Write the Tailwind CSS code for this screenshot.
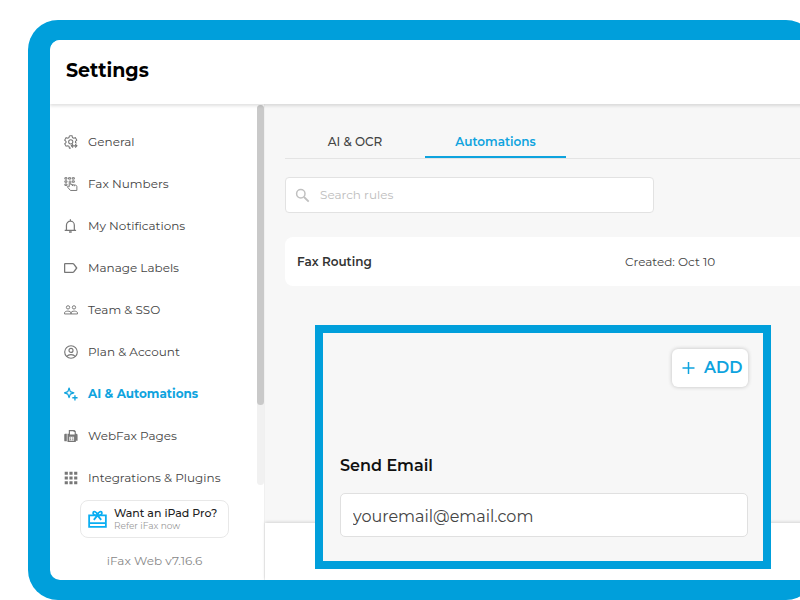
<!DOCTYPE html>
<html lang="en">
<head>
<meta charset="utf-8">
<meta name="viewport" content="width=device-width, initial-scale=1">
<title>Settings</title>
<script src="https://cdn.jsdelivr.net/npm/@tailwindcss/browser@4"></script>
</head>
<body class="flex h-screen overflow-hidden bg-white pt-5 pl-7 font-['Montserrat','Inter',sans-serif] text-[#444]">
<div class="-mr-4 flex min-w-0 flex-1 rounded-[30px] bg-[#009fdb] py-5 pl-[22px]">
  <div class="flex min-w-0 flex-1 flex-col overflow-hidden rounded-l-[10px] bg-white">
    <header class="z-10 flex h-16 shrink-0 items-center bg-white px-4 pb-0.5 shadow-[0_2px_3px_rgba(0,0,0,0.12)]">
      <h1 class="text-[19px] font-bold text-black">Settings</h1>
    </header>
    <div class="flex min-h-0 flex-1">
      <aside class="flex w-[215px] shrink-0 flex-col border-r border-[#f0f0f0]">
        <div class="flex min-h-0 flex-1 overflow-hidden">
          <nav class="min-w-0 flex-1 pt-[17px] text-[12px]" aria-label="Settings">
            <a href="#" class="flex h-[42px] items-center gap-2.5 pl-3.5 whitespace-nowrap">
              <svg class="size-3.5 text-[#777]" viewBox="0 0 16 16" fill="none" stroke="currentColor" stroke-width="1.200"><path d="M6.200.9h3l.5 2 1.300.7 2-.5 1.600 2.700-1.500 1.500v1.300l1.200 1M6.200.9l-.5 2-1.300.7-2-.5L.8 5.800l1.500 1.500v1.400L.8 10.100l1.600 2.700 2-.5 1.300.7.500 2h1.500"/><circle cx="7.700" cy="7.800" r="2.400"/><path d="M8.300 12.400h6.500M12.800 10.400l2 2-2 1.900M10.300 10.500l-2 1.900 2 2"/></svg>General</a>
            <a href="#" class="flex h-[42px] items-center gap-2.5 pl-3.5 whitespace-nowrap">
              <svg class="size-3.5 text-[#777]" viewBox="0 0 16 16" fill="none" stroke="currentColor" stroke-width="1.100"><path d="M1 .8h2.400v1.600H1zM5.200.8h2.400v1.600H5.200zM9.400.8h2.400v1.600H9.400zM1 4.400h2.400V6H1zM9.400 4.400h2.400V6H9.400zM1 8h2.400v1.600H1z"/><path d="M6 11V5.200c0-1.200 1.700-1.200 1.700 0v3.400l5.500.7c.9.200 1.500.8 1.500 1.600v4.500H7.400L4 11.500c-.5-1 .7-1.500 1.300-.9l.7.8M9.700 9v1.300M11.800 9.300v1.300"/></svg>Fax Numbers</a>
            <a href="#" class="flex h-[42px] items-center gap-2.5 pl-3.5 whitespace-nowrap">
              <svg class="size-3.5 text-[#777]" viewBox="0 0 16 16" fill="none" stroke="currentColor" stroke-width="1.400"><path d="M.8 13h13M2.800 13V7a4.500 4.500 0 0 1 9 0v6M7.300 2.500V.4"/><path d="M5.800 14.900h3" stroke-width="1.700"/></svg>My Notifications</a>
            <a href="#" class="flex h-[42px] items-center gap-2.5 pl-3.5 whitespace-nowrap">
              <svg class="size-3.5 text-[#777]" viewBox="0 0 16 16" fill="none" stroke="currentColor" stroke-width="1.500" stroke-linejoin="round"><path d="M1.500 2.900h8.500c.5 0 .9.200 1.200.6L14.500 8l-3.300 4.500c-.3.400-.7.600-1.200.6H1.500c-.5 0-.8-.3-.8-.8V3.700c0-.5.3-.8.8-.8z"/></svg>Manage Labels</a>
            <a href="#" class="flex h-[42px] items-center gap-2.5 pl-3.5 whitespace-nowrap">
              <svg class="size-3.5 text-[#777]" viewBox="0 0 16 16" fill="none" stroke="currentColor" stroke-width="1.100"><circle cx="4.600" cy="5" r="1.900"/><circle cx="11.400" cy="5" r="1.900"/><path d="M.6 12.500v-1.200c0-2.700 7.400-2.700 7.400 0v1.200zM8 12.500v-1.200c0-2.700 7.400-2.700 7.400 0v1.200z"/></svg>Team &amp; SSO</a>
            <a href="#" class="flex h-[42px] items-center gap-2.5 pl-3.5 whitespace-nowrap">
              <svg class="size-3.5 text-[#777]" viewBox="0 0 16 16" fill="none" stroke="currentColor" stroke-width="1.300"><circle cx="8" cy="8" r="7.200"/><circle cx="8" cy="6.200" r="2.300"/><path d="M3.100 13.100c2-2.900 7.800-2.900 9.800 0"/></svg>Plan &amp; Account</a>
            <a href="#" aria-current="page" class="flex h-[42px] items-center gap-2.5 pl-3.5 font-bold whitespace-nowrap text-[#0ea3de]">
              <svg class="size-3.5" viewBox="0 0 16 16" fill="none" stroke="currentColor" stroke-width="1.400" stroke-linejoin="round"><path d="M5.800 1.200 7.200 5.300 11.200 6.700 7.200 8.100 5.800 12.200 4.400 8.100.6 6.700l3.800-1.400z"/><path d="M12.500 9.300v6M9.500 12.300h6" stroke-width="1.500"/></svg>AI &amp; Automations</a>
            <a href="#" class="flex h-[42px] items-center gap-2.5 pl-3.5 whitespace-nowrap">
              <svg class="size-3.5 text-[#777]" viewBox="0 0 16 16" fill="currentColor"><path d="M1.300 5.500h1.900V14H1.300a1 1 0 0 1-1-1V6.500a1 1 0 0 1 1-1z"/><path fill-rule="evenodd" d="M5.500 1.200h6.500L13.500 2.700v2.800h.5A1.500 1.500 0 0 1 15.500 7v6.500h-2v1.300H4V5.500h1.500zM6.800 2.500v3.800h5.400V3.500H11v-1zM6 8.800v4.700h5.500V8.800z"/><path d="M6.700 9.700h1.500v1.100H6.700zM9.300 9.700h1.500v1.100H9.300zM6.700 11.700h1.500v1.100H6.700zM9.300 11.700h1.500v1.100H9.300z"/></svg>WebFax Pages</a>
            <a href="#" class="flex h-[42px] items-center gap-2.5 pl-3.5 whitespace-nowrap">
              <svg class="size-3.5 text-[#777]" viewBox="0 0 16 16" fill="currentColor"><path d="M.8.8h3.600v3.600H.8zM6.200.8h3.600v3.600H6.200zM11.600.8h3.600v3.600h-3.600zM.8 6.200h3.600v3.600H.8zM6.200 6.200h3.600v3.600H6.200zM11.600 6.200h3.600v3.600h-3.600zM.8 11.600h3.600v3.600H.8zM6.200 11.600h3.600v3.600H6.200zM11.600 11.600h3.600v3.600h-3.600z"/></svg>Integrations &amp; Plugins</a>
          </nav>
          <div class="mt-px w-[7px] shrink-0 rounded-full bg-[#f1f1f1]" aria-hidden="true"><div class="h-[79%] rounded-full bg-[#c9c9c9]"></div></div>
        </div>
        <div class="flex flex-col items-center pt-[15px] pr-[5px] pb-[11px]">
          <a href="#" class="flex h-[38px] w-[149px] items-center gap-[7px] rounded-lg border border-[#e8e8e8] pl-[7px] whitespace-nowrap">
            <svg class="size-[19px] shrink-0 text-[#0aaef2]" viewBox="0 0 20 20" fill="none" stroke="currentColor" stroke-width="1.900"><path d="M1.200 5.700h17.600v12H1.200zM1.200 13.900h17.600"/><path d="M10 5.700C7 5.700 5.400 4.900 5.400 3.400c0-2.800 4-2.100 4.600 2.300.6-4.400 4.600-5.100 4.600-2.300 0 1.500-1.600 2.300-4.600 2.300zM10 5.700l-3.900 4.700M10 5.700l3.900 4.700"/></svg>
            <span class="flex flex-col"><span class="text-[11px] leading-[13px] font-medium text-[#222]">Want an iPad Pro?</span><span class="text-[9px] leading-[11px] text-[#999]">Refer iFax now</span></span>
          </a>
          <p class="mt-[15px] text-[12px] leading-4 text-[#888]">iFax Web v7.16.6</p>
        </div>
      </aside>
      <main class="flex min-w-0 flex-1 flex-col bg-[#f7f7f7]">
        <div class="flex-1 pt-[22px] pl-5">
          <div role="tablist" class="flex h-[33px] border-b border-[#e4e4e4] text-[12px]">
            <button type="button" role="tab" aria-selected="false" class="w-[140px] border-b-2 border-transparent pt-0.5 font-medium">AI &amp; OCR</button>
            <button type="button" role="tab" aria-selected="true" class="w-[141px] border-b-2 border-[#0ea3de] pt-0.5 font-semibold text-[#0ea3de]">Automations</button>
          </div>
          <label class="mt-[18px] flex h-9 w-[369px] items-center gap-2.5 rounded-[4px] border border-[#e2e2e2] bg-white pl-[9px]">
            <svg class="size-[15px] shrink-0 text-[#c0c0c0]" viewBox="0 0 15 15" fill="none" stroke="currentColor" stroke-width="1.500"><circle cx="5.800" cy="5.800" r="4.200"/><path d="m9 9 4.700 4.700" stroke-width="1.800"/></svg>
            <input type="search" aria-label="Search rules" placeholder="Search rules" class="min-w-0 flex-1 text-[12px] outline-none placeholder:text-[#bdbdbd]">
          </label>
          <article class="mt-6 flex h-[49px] items-center rounded-l-lg bg-white pl-3 text-[12px]">
            <h2 class="w-[328px] font-semibold text-[#333]">Fax Routing</h2>
            <p>Created: Oct 10</p>
          </article>
        </div>
        <footer class="h-[57px] shrink-0 bg-white shadow-[0_-1px_3px_rgba(0,0,0,0.14)]"></footer>
      </main>
    </div>
  </div>
</div>
<section class="absolute top-[325px] left-[315px] z-20 flex h-[244px] w-[456px] flex-col border-8 border-[#009fdb] bg-[#f7f7f7] pt-4 pr-[15px] pl-[17px]">
  <button type="button" class="flex h-[38px] w-[76px] items-center gap-[9px] self-end rounded-md bg-white pl-2.5 text-[16px] font-semibold text-[#0ea3de] shadow-[0_0_4px_rgba(0,0,0,0.22)]">
    <svg class="size-[13px] shrink-0" viewBox="0 0 13 13" fill="none" stroke="currentColor" stroke-width="1.500"><path d="M6.500 0v12M.5 6h12"/></svg>ADD
  </button>
  <label for="email" class="mt-[67px] text-[16px] leading-6 font-semibold text-[#111]">Send Email</label>
  <input id="email" type="email" value="youremail@email.com" class="mt-[15px] h-11 rounded-[5px] border border-[#e0e0e0] bg-white px-3 pt-0.5 text-[16px] outline-none">
</section>
</body>
</html>
